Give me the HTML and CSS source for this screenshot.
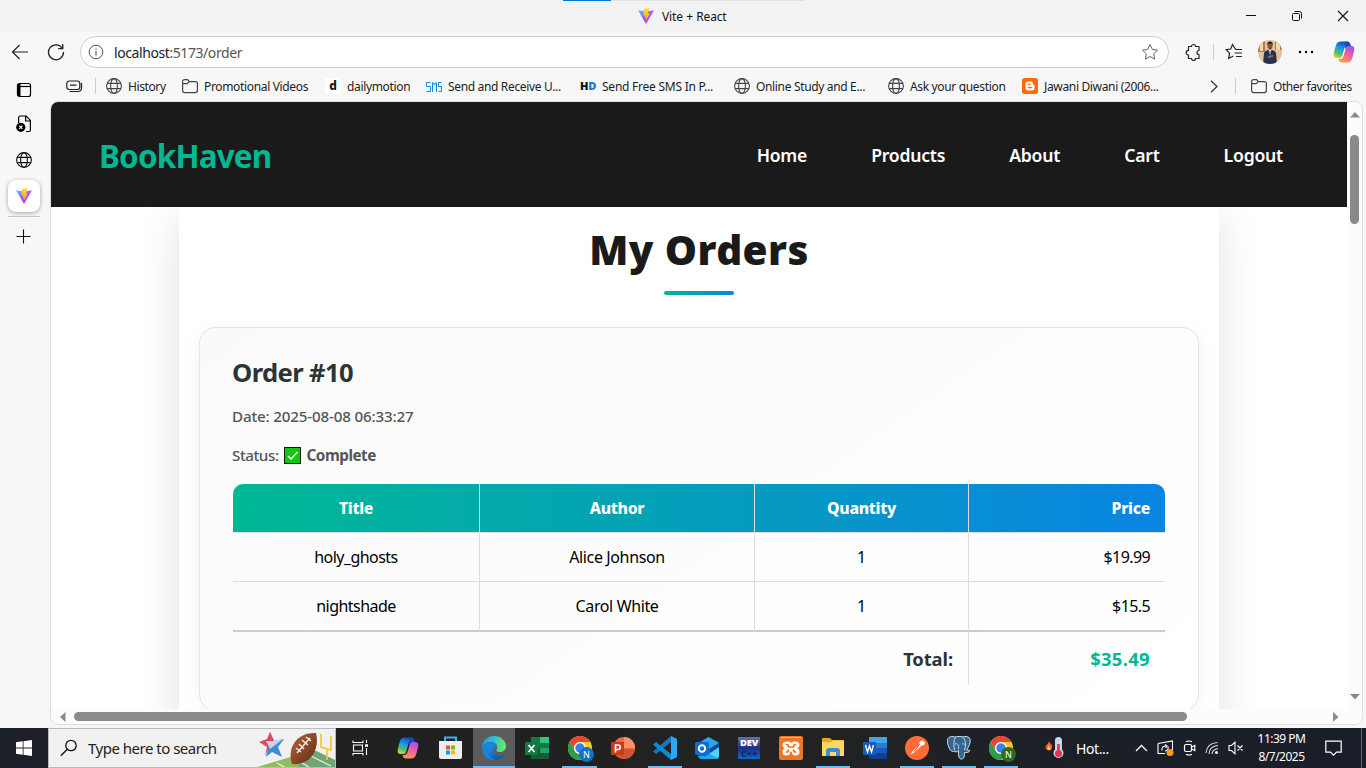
FILE: index.html
```html
<!DOCTYPE html>
<html lang="en">
<head>
<meta charset="utf-8">
<title>Vite + React</title>
<link rel="stylesheet" href="styles.css">
</head>
<body>
<svg class="defs" width="0" height="0">
  <defs>
    <linearGradient id="vg" x1="0" y1="0" x2=".6" y2="1"><stop offset="0" stop-color="#41d1ff"/><stop offset=".5" stop-color="#9a60ff"/><stop offset="1" stop-color="#bd34fe"/></linearGradient>
    <linearGradient id="vy" x1="0" y1="0" x2="0" y2="1"><stop offset="0" stop-color="#ffdd35"/><stop offset="1" stop-color="#ffa800"/></linearGradient>
    <linearGradient id="cpa" x1=".6" y1="0" x2=".2" y2="1"><stop offset="0" stop-color="#1848c8"/><stop offset=".45" stop-color="#1aa0e8"/><stop offset=".72" stop-color="#4cc06a"/><stop offset="1" stop-color="#f4d01c"/></linearGradient>
    <linearGradient id="cpb" x1=".7" y1="0" x2=".3" y2="1"><stop offset="0" stop-color="#a64bf0"/><stop offset=".5" stop-color="#f0629c"/><stop offset="1" stop-color="#ff9a4a"/></linearGradient>
    <linearGradient id="eg" x1="0" y1=".3" x2="1" y2=".4"><stop offset="0" stop-color="#1ba0e8"/><stop offset=".5" stop-color="#2cc3d4"/><stop offset="1" stop-color="#6fea58"/></linearGradient>
    <linearGradient id="eb" x1="0" y1="0" x2="1" y2="1"><stop offset="0" stop-color="#1c8fe0"/><stop offset="1" stop-color="#0c4a94"/></linearGradient>
    <linearGradient id="bl" x1="0" y1="0" x2="1" y2="1"><stop offset="0" stop-color="#b8683c"/><stop offset="1" stop-color="#5c2a14"/></linearGradient>
  </defs>
  <symbol id="globe" viewBox="0 0 16 16"><g fill="none" stroke="currentColor" stroke-width="1.1"><circle cx="8" cy="8" r="7.4"/><ellipse cx="8" cy="8" rx="3.4" ry="7.4"/><path d="M1.2 5.4h13.6M1.2 10.6h13.6"/></g></symbol>
  <symbol id="folder" viewBox="0 0 16 16"><path d="M.6 3.6a2 2 0 0 1 2-2h3l1.800 2h6a2 2 0 0 1 2 2v7a2 2 0 0 1-2 2H2.600a2 2 0 0 1-2-2zM.6 5.600h4.600l2-2" fill="none" stroke="currentColor" stroke-width="1.2"/></symbol>
  <symbol id="vite" viewBox="0 0 16 16"><path d="M0 2.200 8 16 16 2.200 10 3.200 6 3.200z" fill="url(#vg)"/><path d="M11.400 0 5.900 1.100 5.400 7.700 7.300 7.300 6.800 9.900 8.200 9.500 7.800 12.800 11.800 5.500 9.900 5.800z" fill="url(#vy)"/></symbol>
  <symbol id="copilot" viewBox="0 0 24 24"><path d="M17.500 5C17 2.500 16 1.500 14 1.500H8.500C5 1.500 4 4.500 3 8.500S0 18 4.500 18H7.500c2 0 2.500-1.500 3.200-4L12.500 8c.6-2 1.500-3 3-3z" fill="url(#cpa)"/><path d="M6.500 19C7 21.500 8 22.500 10 22.500h5.500c3.500 0 4.500-3 5.500-7S24 6 19.500 6h-3c-2 0-2.500 1.500-3.200 4L11.500 16c-.6 2-1.500 3-3 3z" fill="url(#cpb)"/><path d="M14 1.500h1.500c2 0 2.500 1.500 3 3l.5 1.500h-2.500c-1.700 0-2.300 1-3 3l-.5-2z" fill="#1748b8"/></symbol>
  <symbol id="chrome" viewBox="0 0 24 24"><circle cx="12" cy="12" r="12" fill="#ffc928"/><path d="M1.600 6A12 12 0 0 1 22.400 6H12a6 6 0 0 0-5.200 9z" fill="#e8453c"/><path d="M1.600 6A12 12 0 0 0 12 24l5.200-9A6 6 0 0 1 6.800 15z" fill="#2aa04c"/><circle cx="12" cy="12" r="6" fill="#fff"/><circle cx="12" cy="12" r="4.700" fill="#3c7ff0"/></symbol>
</svg>

<div class="desktop">
  <header class="tabstrip">
    <div class="load"><i></i></div>
    <div class="tabname"><svg width="16" height="16"><use href="#vite"/></svg><span>Vite + React</span></div>
    <div class="winbtns">
      <svg width="12" height="12"><path d="M1 5.500h10" stroke="#111"/></svg>
      <svg width="12" height="12" fill="none" stroke="#111"><rect x="1.500" y="3.500" width="7" height="7" rx="1"/><path d="M3.500 1.500h5q2 0 2 2v5"/></svg>
      <svg width="12" height="12"><path d="m1 1 10 10M11 1 1 11" stroke="#111" stroke-width="1.100"/></svg>
    </div>
  </header>

  <div class="toolbar">
    <svg class="back" width="18" height="16" fill="none" stroke="#222" stroke-width="1.200"><path d="M17 8H1.500M8.500 1 1.500 8l7 7"/></svg>
    <svg class="reload" width="18" height="18" fill="none" stroke="#222" stroke-width="1.300"><path d="M15.300 5.200A7.500 7.500 0 1 0 16.500 9M15.800 1v4.700h-4.600"/></svg>
    <div class="address">
      <svg width="16" height="16" fill="none" stroke="#555"><circle cx="8" cy="8" r="6.800"/><path d="M8 7v4.500M8 4.400v1.400" stroke-width="1.200"/></svg>
      <span class="url">localhost<b>:5173/order</b></span>
      <svg class="star" width="18" height="18" viewBox="0 0 18 18" fill="none" stroke="#666"><path d="m9 1.500 2.300 4.900 5.200.7-3.800 3.700.9 5.300L9 13.500l-4.600 2.600.9-5.300-3.800-3.700 5.200-.7z"/></svg>
    </div>
    <div class="tools">
      <svg width="18" height="18" viewBox="0 0 18 18" fill="none" stroke="#222" stroke-width="1.200" stroke-linejoin="round"><path d="M4.500 3.500h3a2 2 0 0 1 4 0h3.500v4a2 2 0 0 0 0 4v4h-3.500a2 2 0 0 1-4 0h-3v-3.500a2.300 2.300 0 0 1 0-4.600z"/></svg>
      <i class="sep"></i>
      <svg width="18" height="18" viewBox="0 0 18 18" fill="none" stroke="#222" stroke-width="1.200"><path d="M10 5.500 7.500 1.500 5.700 6l-4.500.6 3.300 3.600-.8 5.300 4.600-2.500M11 6.500h6M9.500 10h7.500M11 13.500h6M10 5.500l1 1"/></svg>
      <svg class="avatar" width="24" height="24" viewBox="0 0 24 24"><rect width="24" height="24" fill="#e6c29a"/><path d="M0 0h7v12H0zM17 0h7v10h-7z" fill="#b07a48"/><path d="M2 3h3v8H2zM18 2h4v8h-4z" fill="#eed9b0"/><path d="M5 24 6 13q1-3 6-3.500 5 .5 6 3.500l1 11z" fill="#28324c"/><path d="m10.500 10 1.500 5 1.500-5z" fill="#e6eaf2"/><path d="m11.300 11 .7 6 .7-6z" fill="#2474c8"/><ellipse cx="12" cy="5.800" rx="2.500" ry="3.500" fill="#8a5234"/><path d="M9 5.500C8.500 0 15.500 0 15 5.500L14 3.500h-4z" fill="#181414"/><path d="m10 16 5-1v2l-5 1z" fill="#9a6848"/></svg>
      <svg width="16" height="4"><circle cx="2" cy="2" r="1.200"/><circle cx="8" cy="2" r="1.200"/><circle cx="14" cy="2" r="1.200"/></svg>
      <svg width="24" height="24"><use href="#copilot"/></svg>
    </div>
  </div>

  <div class="work">
    <aside class="vtabs">
      <svg width="16" height="16" fill="none" stroke="#000" stroke-width="1.200"><rect x="1.500" y="1.500" width="13" height="13" rx="2"/><path d="M3 2v12" stroke-width="3"/><path d="M4 4.500h10"/></svg>
      <svg width="16" height="18" fill="none" stroke="#000" stroke-width="1.200"><path d="M2.600 8V2.600q0-1.600 1.600-1.600h6l4.200 4.400V15q0 1.500-1.500 1.500H10M9.600 1v5h4.800"/><circle cx="4.800" cy="12.300" r="4.600" fill="#000" stroke="none"/><path d="m3.200 10.700 3.200 3.200m0-3.200-3.200 3.200" stroke="#fff"/></svg>
      <svg width="16" height="16"><use href="#globe"/></svg>
      <div class="active"><svg width="16" height="16"><use href="#vite"/></svg></div>
      <i class="rule"></i>
      <svg class="plus" width="16" height="16"><path d="M7.500 .5v14M.5 7.500h14" stroke="#111" stroke-width="1.100"/></svg>
    </aside>

    <div class="main">
      <nav class="bookmarks">
        <svg class="wal" width="17" height="13" fill="none" stroke="#222" stroke-width="1.200"><rect x=".8" y="1" width="13" height="8.500" rx="2.500"/><path d="M4 5.200h6.500M15.500 3v5q0 3.500-3.500 3.500H3.500" /></svg>
        <i class="sep"></i>
        <a class="w76"><svg><use href="#globe"/></svg><span>History</span></a>
        <a class="w143"><svg><use href="#folder"/></svg><span>Promotional Videos</span></a>
        <a class="w101"><em class="dm">d</em><span>dailymotion</span></a>
        <a class="w154"><svg viewBox="0 0 16 16" fill="none" stroke="#1388e8" stroke-width="1"><path d="M4.500 4.500H.5v4h4v5H.5M6.500 14V4.500M6.500 5h1l1 2 1-2h1M10.500 4.500V14M15.500 4.500h-3v4h3v5h-3"/></svg><span>Send and Receive U...</span></a>
        <a class="w154 wide"><em class="hd">H<b>D</b></em><span>Send Free SMS In P...</span></a>
        <a class="w154"><svg><use href="#globe"/></svg><span>Online Study and E...</span></a>
        <a class="w134"><svg><use href="#globe"/></svg><span>Ask your question</span></a>
        <a class="w188"><svg viewBox="0 0 16 16"><rect width="16" height="16" rx="2.500" fill="#ff6a0c"/><path d="M6 3.500h2.500q2.500 0 2.500 2.500 0 1 1.500 1v2.800q0 2.700-2.700 2.700H6.200q-2.700 0-2.700-2.700V6Q3.500 3.500 6 3.500z" fill="#fff"/><path d="M6.200 6.300h2M6.200 9.700h3.500" stroke="#ff6a0c" stroke-width="1.300" stroke-linecap="round"/></svg><span>Jawani Diwani (2006...</span></a>
        <svg class="more" width="8" height="13" fill="none" stroke="#333" stroke-width="1.200"><path d="m1 .8 6 5.700-6 5.700"/></svg>
        <i class="sep last"></i>
        <a class="other"><svg><use href="#folder"/></svg><span>Other favorites</span></a>
      </nav>

      <section class="frame">
        <div class="view">
          <header class="site">
            <strong class="brand">BookHaven</strong>
            <nav class="links"><a>Home</a><a>Products</a><a>About</a><a>Cart</a><a>Logout</a></nav>
          </header>
          <main class="orders">
            <h1>My Orders</h1>
            <div class="underline"></div>
            <article class="card">
              <h2>Order #10</h2>
              <p class="date">Date: 2025-08-08 06:33:27</p>
              <p class="status"><span>Status:</span><svg width="18" height="18"><rect x=".5" y="1.500" width="16" height="16" fill="#16c60c" stroke="#081c06"/><path d="m4 10 3 3 6.500-7" fill="none" stroke="#fff" stroke-width="1.400"/></svg><b>Complete</b></p>
              <table>
                <colgroup><col class="c1"><col class="c2"><col class="c3"><col class="c4"></colgroup>
                <thead><tr><th>Title</th><th>Author</th><th>Quantity</th><th class="r">Price</th></tr></thead>
                <tbody>
                  <tr><td>holy_ghosts</td><td>Alice Johnson</td><td>1</td><td class="r">$19.99</td></tr>
                  <tr><td>nightshade</td><td>Carol White</td><td>1</td><td class="r">$15.5</td></tr>
                </tbody>
                <tfoot><tr><td colspan="3" class="r">Total:</td><td class="r sum">$35.49</td></tr></tfoot>
              </table>
            </article>
          </main>
        </div>
        <div class="vbar"><svg width="10" height="6"><path d="M0 5.500 5 0l5 5.500z" fill="#8a8a8a"/></svg><i></i><svg class="dn" width="10" height="6"><path d="M0 0 5 5.500 10 0z" fill="#8a8a8a"/></svg></div>
        <div class="hbar"><svg width="6" height="10"><path d="M5.500 0 0 5l5.500 5z" fill="#8a8a8a"/></svg><i></i><svg class="rt" width="6" height="10"><path d="m0 0 5.500 5L0 10z" fill="#8a8a8a"/></svg></div>
      </section>
    </div>
  </div>

  <footer class="taskbar">
    <div class="start"><svg width="16" height="16" fill="#fff"><path d="M0 2.300 6.700 1.300v6.300H0zM7.500 1.200 16 0v7.600H7.500zM0 8.400h6.700v6.300L0 13.700zM7.500 8.400H16V16l-8.500-1.200z"/></svg></div>
    <div class="search">
      <svg width="18" height="18" fill="none" stroke="#111" stroke-width="1.300"><circle cx="11" cy="6.500" r="5.200"/><path d="m7.300 10.200-6.500 6.500"/></svg>
      <span>Type here to search</span>
      <svg class="art" width="78" height="38" viewBox="0 0 78 38"><path d="M0 38 57 21l21 10v7z" fill="#92bd5e"/><path d="m57 21 21 10v7H40z" fill="#6fa674"/><path d="m20 34 9 5M36 29l16 9M50 25l24 12" stroke="#e4f2d4" stroke-width="1.300"/><path d="m13 3 4 9 10-2-6 8 4 10-10-5-6 5 2-9z" fill="#3b8fd0"/><path d="m13 3 4 9-5 6-4 9 2-9-8-5 8-3z" fill="#e2475a"/><path d="m9 12 8 0 9-2-13 10z" fill="#cdd0e8"/><path d="M35 35c-5-14 3-32 24-31 4 15-5 33-24 31z" fill="url(#bl)"/><path d="m40 24 13-15M39 19l5 4M42 15l5 5M45 11l6 5M49 8l5 4" stroke="#f4ece4" stroke-width="1.500"/><path d="M64 5v13l10 3V7M70 19v12" stroke="#f2c92c" stroke-width="1.700" fill="none"/></svg>
    </div>
    <div class="tview"><svg width="18" height="16" fill="none" stroke="#fff" stroke-width="1.100"><path d="M1 3V.5M1 2.500h10M11 .5V3M1.500 5h9v6h-9zM1 15.500V13M1 13.500h10M11 15.500V13M14.500 0v3M14.500 8v7"/><path d="M13 5.500h3" stroke-width="2.500"/></svg></div>
    <div class="apps">
      <div><svg width="24" height="24"><use href="#copilot"/></svg></div>
      <div><svg width="23" height="24"><path d="M6 6V1.500h11V6" fill="none" stroke="#32b4f0" stroke-width="2"/><path d="M0 5h23v16q0 2-2 2H2q-2 0-2-2z" fill="#eee"/><path d="M7 9.500h4v4H7z" fill="#f25022"/><path d="M12 9.500h4v4h-4z" fill="#7fba00"/><path d="M7 14.500h4v4H7z" fill="#00a4ef"/><path d="M12 14.500h4v4h-4z" fill="#ffb900"/></svg></div>
      <div class="now"><svg width="24" height="24"><path d="M0 12C0 4 6 0 12 0c7 0 12 5 12 10 0 4-3 6-6 6-4 0-4-2-3-3.500C16 9 13 6 9 6 4 6 1 9 0 12z" fill="url(#eg)"/><path d="M0 12c1-4 4-6 8-6s7 3 6 5c-4-1-7 2-5 6 2 5 8 6 13 2-2 3-6 5-10 5C5 24 0 19 0 12z" fill="#1b83d8"/><path d="M8 12c-3 3-2 10 5 12 4 0 8-2 10-5.500-5 2.500-11 .5-11-4 0-1.500 1-2 1-3-2-.5-4 0-5 .5z" fill="url(#eb)"/></svg></div>
      <div><svg width="24" height="22"><path d="M6 0h18v22H6z" fill="#21a366"/><path d="M6 0h9v6H6zM6 6h18v5H6z" fill="#107c41"/><path d="M15 0h9v6h-9z" fill="#33c481"/><path d="M6 11h9v11H6zM15 16h9v6h-9z" fill="#185c37"/><rect y="5" width="13" height="13" rx="1" fill="#107c41"/><path d="m3.500 8 6 7m0-7-6 7" stroke="#fff" stroke-width="1.700"/></svg></div>
      <div class="on"><svg width="24" height="24"><use href="#chrome"/></svg><em class="badge blue">N</em></div>
      <div><svg width="24" height="22"><circle cx="13" cy="11" r="11" fill="#ed6c47"/><path d="M13 0a11 11 0 0 1 11 11H13z" fill="#ff8f6b"/><path d="M2.200 12H24a11 11 0 0 1-21.800 0z" fill="#d35230"/><rect y="5" width="13" height="13" rx="1" fill="#c43e1c"/><path d="M4.500 15.500V8H7a2 2 0 0 1 0 4.500H4.500" fill="none" stroke="#fff" stroke-width="1.700"/></svg></div>
      <div class="on"><svg width="24" height="24"><path d="M18 0v24l6-3V3z" fill="#2aa8f2"/><path d="m18 6-15 12-3-2.500L18 0z" fill="#1279bf"/><path d="M18 18 3 6 0 8.500 18 24z" fill="#0b8bd8"/></svg></div>
      <div><svg width="24" height="24"><path d="M3 7 13.500 1 24 7v12q0 4-4 4H7q-4 0-4-4z" fill="#1066b5"/><path d="m7 5 6.500-4L24 7l-10 6z" fill="#28a8ea"/><path d="M15 12.500 24 7v4l-9 6z" fill="#0a4c9c"/><path d="m11 20 13-9v8q0 4-4 4H8z" fill="#50d0fa"/><path d="M14 17.500 24 23H7q-3 0-4-3h8z" fill="#22a4ec"/><rect y="6" width="14" height="13" rx="1.500" fill="#0f6cd0"/><circle cx="7" cy="12.500" r="3.200" fill="none" stroke="#fff" stroke-width="1.900"/></svg></div>
      <div><span class="dev"><b>DEV</b><i>C++</i></span></div>
      <div><svg width="24" height="24"><rect width="24" height="24" rx="2" fill="#ed7625"/><path d="M2 1.500h20" stroke="#ffc090"/><path d="M8 5.500h1.500q2.500 0 2.500 2 0-2 2.500-2H16q4.500 0 4.500 3.500 0 2-2 3.200 2 1.300 2 3.800 0 3.500-4 3.500-3.500 0-3.500-3 0-1-1-1t-1 1q0 3-3.500 3-4 0-4-3.500 0-2.500 2-3.800-2-1.200-2-3.200 0-3.500 4.500-3.500z" fill="#fff"/><path d="M7.500 8.500q2 0 2 2.500h5q0-2.500 2-2.500M7.500 16q2 0 2-2M16.500 16q-2 0-2-2" fill="none" stroke="#ed7625" stroke-width="1.700" stroke-linecap="round"/></svg></div>
      <div class="on"><svg width="22" height="20"><path d="M0 1q0-1 1-1h7l2 2h12v5H0z" fill="#eba51a"/><path d="M0 4h9l2-1.500h11V18H0z" fill="#ffd764"/><path d="M4 18v-5q0-3 3-3h8q3 0 3 3v5h-4v-4H8v4z" fill="#3b8fd0"/></svg></div>
      <div><svg width="24" height="22"><path d="M6 0h18v22H6z" fill="#185abd"/><path d="M6 0h18v6H6z" fill="#41a5ee"/><path d="M6 6h18v5H6z" fill="#2b7cd3"/><path d="M6 16h18v6H6z" fill="#103f91"/><rect y="5" width="13" height="13" rx="1" fill="#185abd"/><path d="m2.500 8 2 7 2-6 2 6 2-7" fill="none" stroke="#fff" stroke-width="1.400"/></svg></div>
      <div class="on"><svg width="24" height="24"><circle cx="12" cy="12" r="12" fill="#ff6c37"/><circle cx="17" cy="7" r="2.600" fill="#fff"/><path d="m14.500 8.500 1.700 1.800-7 6L5 19l3.500-5z" fill="#fff"/><path d="m14.500 8.500-5.500 7" stroke="#d0522a"/></svg></div>
      <div class="on"><svg width="24" height="24"><path d="M7 15C3 18-1 6 1 2.500 3-.5 7 1 8.500 1c2-.8 5-.8 7 0 2-.6 5-1 7 1 2 3-1 10-3 12 1 .5 3 0 3.500.5-.8 2-4 2.300-5.500 2-.2 3 0 6.500-3 6.500-3.500 0-3-5-3-8.500C10 16 8 16.500 7 15z" fill="#336791" stroke="#d5e0ea" stroke-width="1"/><path d="M8.500 1c-2 3-2 9-1 13M15.500 1c3 2 4 8 2 13M8 8c3-1 4 1 3.500 5M15 8c2-.5 3 0 3.500 2" fill="none" stroke="#c6d5e2" stroke-width="1"/></svg></div>
      <div class="on"><svg width="24" height="24"><use href="#chrome"/></svg><em class="badge green">N</em></div>
    </div>
    <div class="weather"><svg width="19" height="22"><path d="M4 4q.5 2 2 3t1 4q-.5 2.500-3 2.500T.5 11q0-2 1.500-3.500T4 4z" fill="#f0652c"/><path d="M3.600 8.500 5.500 11q0 2-1.700 2T2.500 11z" fill="#ffc24a"/><path d="M10 3.500a3.500 3.500 0 0 1 7 0v9a5 5 0 1 1-7 0z" fill="#c4d8f0"/><circle cx="13.500" cy="16.500" r="3.500" fill="#e83350"/><path d="M13.500 7v9" stroke="#e83350" stroke-width="2.600"/></svg><span>Hot...</span></div>
    <div class="tray">
      <svg width="13" height="8" fill="none" stroke="#fff" stroke-width="1.300"><path d="m1 7 5.500-5.500L12 7"/></svg>
      <svg width="17" height="16" fill="none" stroke="#fff" stroke-width="1.100"><path d="M1 3.500 15.500 1v9M8 13.500H1v-10M5 10.500q-.5-5 4.500-4.500M8 4.500 10 6 8.500 8M11 6.500q1 4-3 4.500"/><circle cx="13" cy="12.500" r="3.500" fill="#ff9a14" stroke="none"/></svg>
      <svg width="13" height="16" fill="none" stroke="#fff" stroke-width="1.200"><rect x="1.500" y="4.500" width="7" height="7" rx="1.500"/><path d="m8.500 7 3.300-1.500v5L8.500 9M3 1.800q3-1.600 6 0M3 14.200q3 1.600 6 0"/></svg>
      <svg width="14" height="14" fill="none" stroke="#ddd" stroke-width="1.100"><path d="M1 12Q2 2 12.500 1.500M4 13Q4.500 5 13 4.500M7 13q.5-4.500 6-5.500"/><circle cx="11.500" cy="11.500" r="1.500" fill="#fff" stroke="none"/></svg>
      <svg width="16" height="14" fill="none" stroke="#fff" stroke-width="1.100"><path d="M1 4.500h2.500L7 1.200v11.600L3.500 9.500H1zM9.500 4.500l5 5m0-5-5 5"/></svg>
    </div>
    <div class="clock"><span>11:39 PM</span><span>8/7/2025</span></div>
    <svg class="note" width="17" height="17" fill="none" stroke="#fff" stroke-width="1.200"><path d="M.8 1.200h15.400v11H11.500l-3 3-3-3H.8z"/></svg>
    <i class="peek"></i>
  </footer>
</div>
</body>
</html>
```
FILE: styles.css
```css
* { box-sizing: border-box; }
body { margin: 0; font-family: "Noto Sans", "Open Sans", sans-serif; }
svg { display: block; flex: none; }
em, i { font-style: normal; }
.defs { position: absolute; }
.desktop { width: 1366px; height: 768px; overflow: hidden; display: grid; grid-template-rows: 32px 40px 656px 40px; background: #f7f7f7; }

.tabstrip { background: #f2f2f2; display: grid; grid-template-columns: 563px 1fr 192px; position: relative; }
.load { position: absolute; left: 563px; top: 0; width: 242px; height: 1px; background: #e2e2e2; }
.load i { display: block; width: 48px; height: 1px; background: #0078d4; }
.tabname { grid-column: 2; display: flex; align-items: center; gap: 8px; padding-left: 75px; font-size: 12px; letter-spacing: -.15px; word-spacing: .4px; color: #111; }
.winbtns { display: flex; align-items: center; gap: 34px; padding-left: 71px; }

.toolbar { display: flex; align-items: center; }
.back { margin-left: 11px; }
.reload { margin-left: 18px; }
.address { margin-left: 15px; width: 1089px; height: 32px; border: 1px solid #cfcfcf; border-radius: 16px; background: #fff; display: flex; align-items: center; padding: 0 9px 0 7px; }
.url { margin-left: 10px; flex: 1; font-size: 14px; letter-spacing: -.42px; color: #222; }
.url b { font-weight: 400; color: #555; }
.tools { display: flex; align-items: center; margin-left: 15px; gap: 11px; }
.tools .avatar { border-radius: 50%; margin: 0 5px 0 4px; }
.tools svg:last-child { margin-left: 7px; }
.sep { width: 1px; height: 16px; background: #ccc; flex: none; }

.work { display: grid; grid-template-columns: 50px 1fr; }
.vtabs { display: flex; flex-direction: column; align-items: center; padding: 10px 3px 0 0; color: #111; }
.vtabs > svg:nth-of-type(2) { margin-top: 17px; }
.vtabs > svg:nth-of-type(3) { margin-top: 19px; }
.active { width: 32px; height: 32px; margin-top: 12px; border-radius: 8px; background: #fff; box-shadow: 0 1px 4px rgba(0,0,0,.35); display: grid; place-items: center; }
.rule { width: 32px; height: 1px; background: #c8c8c8; margin-top: 4px; }
.vtabs .plus { margin-top: 12px; }
.main { display: grid; grid-template-rows: 29px 1fr; min-width: 0; }
.bookmarks { display: flex; align-items: center; padding: 0 0 1px 16px; font-size: 12px; letter-spacing: -.34px; color: #222; }
.bookmarks .wal { margin-right: 12px; }
.bookmarks .sep { margin-right: 10px; }
.bookmarks a { display: flex; align-items: center; gap: 6px; white-space: nowrap; flex: none; }
.bookmarks a svg, .bookmarks em { width: 16px; height: 16px; flex: none; color: #444; }
.w76 { width: 76px; } .w143 { width: 143px; } .w101 { width: 101px; } .w154 { width: 154px; }
.w134 { width: 134px; } .w188 { width: 188px; }
.bookmarks .w76 { letter-spacing: -.4px; }
.bookmarks .wide { letter-spacing: -.24px; }
.bookmarks .other { letter-spacing: -.42px; }
.bookmarks .more { margin-right: 17px; }
.bookmarks .last { margin-right: 15px; }
.bookmarks .dm { background: #fff; font-weight: 800; line-height: 15px; text-align: center; color: #111; }
.bookmarks .hd { font: 800 11px/16px "Open Sans", sans-serif; letter-spacing: -.3px; color: #111; }
.hd b { color: #1878d0; }

.frame { margin: 0 3px 3px 0; border: 1px solid #ddd; border-radius: 8px; overflow: hidden; background: #fcfcfc; display: grid; grid-template: 607px 15px / 1296px 15px; }
.view { overflow: hidden; background: #fff; }
.site { height: 105px; background: #1a1a1a; display: flex; justify-content: space-between; align-items: center; padding: 3px 64px 0 48px; position: relative; z-index: 1; }
.brand { color: #00b894; font-size: 31.5px; line-height: 40px; letter-spacing: -.85px; }
.links { display: flex; gap: 64px; color: #fff; font-size: 17.6px; font-weight: 600; letter-spacing: -.22px; }
.links a { margin-top: -2px; }
.orders { margin-left: 128px; width: 1040px; height: 600px; padding: 13px 20px; background: #fff; box-shadow: 0 10px 40px rgba(0,0,0,.12); text-align: center; }
h1 { margin: 0; font-size: 40.5px; line-height: 60px; font-weight: 900; letter-spacing: .4px; color: #1a1a1a; }
.underline { width: 70px; height: 4px; margin: 11px auto 32px; border-radius: 2px; background: linear-gradient(90deg, #00b894, #0984e3); }
.card { height: 384px; border: 1px solid #e4e4e4; border-radius: 16px; padding: 27px 33px 0 32px; background: linear-gradient(145deg, #fafafa, #fff); box-shadow: 0 4px 20px rgba(0,0,0,.05); text-align: left; }
h2 { margin: 0; font-size: 25.6px; line-height: 36px; font-weight: 700; color: #2d3436; letter-spacing: -.6px; }
.date, .status { margin: 0; font-size: 15.2px; line-height: 24px; color: #555; font-weight: 500; letter-spacing: -.18px; }
.date { margin-top: 13px; }
.status { margin-top: 15px; display: flex; align-items: center; letter-spacing: -.45px; }
.status svg { margin: 0 5px 0 5px; }
.status b { font-weight: 700; }
table { width: 932px; margin: 17px 0 0 1px; table-layout: fixed; border-collapse: separate; border-spacing: 0; border-radius: 10px 10px 0 0; overflow: hidden; font-size: 16px; letter-spacing: -.38px; color: #000; }
.c1 { width: 247px; } .c2 { width: 275px; } .c3 { width: 214px; } .c4 { width: 196px; }
thead tr { background: linear-gradient(90deg, #00b894, #0984e3); }
th, td { padding: 0 15px; height: 49px; line-height: 24px; border-right: 1px solid #ddd; border-bottom: 1px solid #ddd; text-align: center; }
th { color: #fff; font-weight: 800; font-size: 15.8px; letter-spacing: -.3px; }
tr > :last-child { border-right: 0; }
td:first-child { letter-spacing: -.55px; }
tbody .r { letter-spacing: -.6px; }
tbody tr:last-child td { height: 50px; border-bottom: 2px solid #ccc; }
tfoot td, tfoot td:first-child { height: 53px; border-bottom: 0; font-size: 18.400px; font-weight: 700; color: #2d3436; letter-spacing: -.1px; }
.r { text-align: right; }
tfoot .sum { color: #00b894; letter-spacing: .35px; }
.vbar { display: flex; flex-direction: column; align-items: center; padding-top: 10px; }
.vbar i { width: 9px; height: 89px; border-radius: 5px; background: #8a8a8a; margin-top: 17px; }
.vbar .dn { margin-top: 470px; }
.hbar { display: flex; align-items: center; padding-left: 9px; }
.hbar i { width: 1113px; height: 9px; border-radius: 5px; background: #8a8a8a; margin-left: 8px; }
.hbar .rt { margin-left: 146px; }

.taskbar { display: flex; align-items: center; background: linear-gradient(90deg, #1c2029, #202020 20%, #222 60%, #1b2027 80%, #1a1e28); color: #fff; }
.start { width: 48px; display: grid; place-items: center; }
.search { width: 288px; height: 40px; background: #f1f1f1; border: 1px solid #bbb; display: flex; align-items: center; padding-left: 11px; color: #222; font-size: 15px; letter-spacing: -.5px; position: relative; }
.search span { margin-left: 10px; }
.search .art { position: absolute; right: 0; top: 0; }
.tview { width: 50px; padding-left: 16px; }
.apps { display: grid; grid-template-columns: repeat(6, 43px) repeat(9, 42px); height: 40px; }
.apps > div { display: grid; place-items: center; position: relative; }
.apps .now { background: #5c5c5c; box-shadow: inset 0 -2px #76b9ed; margin-left: 1px; }
.apps .on::after { content: ""; position: absolute; left: 4px; right: 4px; bottom: 0; height: 2px; background: #76b9ed; }
.badge { position: absolute; left: 21px; top: 19px; width: 15px; height: 15px; border-radius: 50%; font-size: 9px; line-height: 15px; text-align: center; }
.blue { background: #0f72c4; } .green { background: #2f6b1c; }
.dev { width: 22px; height: 22px; background: linear-gradient(#6a70b0, #1d2f86 50%, #1668c0); display: block; font: 800 9.5px/12px "Open Sans", sans-serif; text-align: center; letter-spacing: -.2px; }
.dev b, .dev i { display: block; }
.dev i { color: #0d2b68; line-height: 9px; }
.weather { display: flex; align-items: center; gap: 12px; margin-left: 23px; width: 90px; font-size: 14px; letter-spacing: -.4px; }
.tray { display: flex; align-items: center; gap: 9px; width: 122px; }
.clock { width: 49px; display: flex; flex-direction: column; align-items: center; font-size: 12px; line-height: 18px; letter-spacing: -.5px; white-space: nowrap; }
.note { margin-left: 19px; }
.peek { width: 1px; height: 40px; background: #666; margin-left: auto; margin-right: 4px; }
```
